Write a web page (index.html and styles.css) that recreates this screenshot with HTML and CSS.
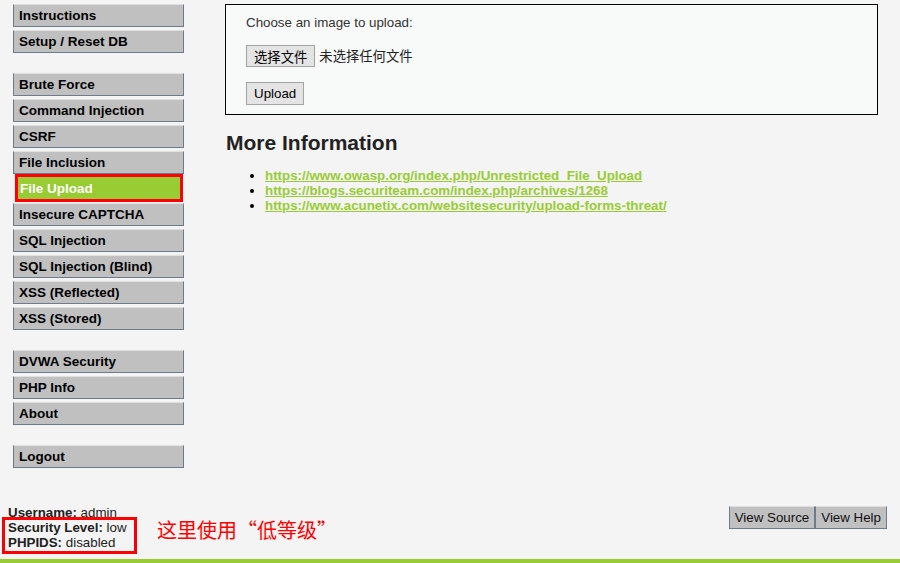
FILE: index.html
```html
<!DOCTYPE html>
<html lang="zh-CN">
<head>
  <meta charset="UTF-8">
  <title>Vulnerability: File Upload</title>
  <link rel="stylesheet" href="styles.css">
</head>
<body>
  <div class="page">
    <div class="columns">
      <!-- Side menu -->
      <div class="main-menu">
        <ul class="menu-block">
          <li><a href="#">Instructions</a></li>
          <li><a href="#">Setup / Reset DB</a></li>
        </ul>
        <ul class="menu-block">
          <li><a href="#">Brute Force</a></li>
          <li><a href="#">Command Injection</a></li>
          <li><a href="#">CSRF</a></li>
          <li><a href="#">File Inclusion</a></li>
          <li class="selected"><a href="#">File Upload</a></li>
          <li><a href="#">Insecure CAPTCHA</a></li>
          <li><a href="#">SQL Injection</a></li>
          <li><a href="#">SQL Injection (Blind)</a></li>
          <li><a href="#">XSS (Reflected)</a></li>
          <li><a href="#">XSS (Stored)</a></li>
        </ul>
        <ul class="menu-block">
          <li><a href="#">DVWA Security</a></li>
          <li><a href="#">PHP Info</a></li>
          <li><a href="#">About</a></li>
        </ul>
        <ul class="menu-block">
          <li><a href="#">Logout</a></li>
        </ul>
      </div>

      <!-- Main body -->
      <div class="main-body">
        <div class="code-area">
          <p>Choose an image to upload:</p>
          <div class="file-row">
            <button class="native-btn">选择文件</button>
            <span class="file-name">未选择任何文件</span>
          </div>
          <button class="native-btn upload-btn">Upload</button>
        </div>

        <h2>More Information</h2>
        <ul class="info-links">
          <li><a href="#">https://www.owasp.org/index.php/Unrestricted_File_Upload</a></li>
          <li><a href="#">https://blogs.securiteam.com/index.php/archives/1268</a></li>
          <li><a href="#">https://www.acunetix.com/websitesecurity/upload-forms-threat/</a></li>
        </ul>
      </div>
    </div>

    <!-- Status + view buttons -->
    <div class="bottom-row">
      <div class="status">
        <div><b>Username:</b> admin</div>
        <div class="marked">
          <div><b>Security Level:</b> low</div>
          <div><b>PHPIDS:</b> disabled</div>
        </div>
      </div>
      <div class="note">这里使用“低等级”</div>
      <div class="view-buttons">
        <button class="view-btn">View Source</button><button class="view-btn">View Help</button>
      </div>
    </div>

    <div class="footer-bar"></div>
  </div>
</body>
</html>
```

FILE: styles.css
```css
/* General */
* {
  box-sizing: border-box;
  margin: 0;
  padding: 0;
}

body {
  font-family: "Liberation Sans", Arial, "Noto Sans CJK SC", sans-serif;
  font-size: 13.33px;
  line-height: 15px;
  color: #000;
  background-color: #f4f4f4;
}

.page {
  height: 563px;
  display: flex;
  flex-direction: column;
}

.columns {
  display: flex;
  flex: 1;
  padding-top: 4px;
}

/* Side menu */
.main-menu {
  width: 171px;
  margin-left: 13px;
}

.menu-block {
  list-style: none;
  margin-bottom: 20px;
}

.menu-block li {
  margin-bottom: 3px;
}

.menu-block li a {
  display: block;
  height: 23px;
  padding: 3px 0 3px 5px;
  background-color: #c0c0c0;
  border: 1px solid #6d7b8d;
  border-top-color: #e0e0e0;
  color: #000;
  font-weight: bold;
  font-size: 13.5px;
  text-decoration: none;
}

.menu-block li.selected a {
  height: 28px;
  margin: -3px 1px -2px 2px;
  padding: 4px 0 3px 2px;
  background-color: #99cc33;
  border: 3px solid #ff0000;
  color: #fff;
}

/* Main body */
.main-body {
  width: 653px;
  margin-left: 41px;
}

.code-area {
  background-color: #f8f9f9;
  border: 1px solid #000;
  padding: 10px 20px 9px 20px;
  color: #333;
}

.code-area p {
  margin-bottom: 15px;
}

.file-row {
  display: flex;
  align-items: center;
  margin-bottom: 15px;
}

.native-btn {
  font-family: "Liberation Sans", Arial, "Noto Sans CJK SC", sans-serif;
  font-size: 13.33px;
  height: 22px;
  padding: 0 7px;
  background-color: #e4e4e4;
  border: 1px solid #a3a3a3;
  color: #000;
}

.file-name {
  margin-left: 4px;
  color: #222;
}

.upload-btn {
  height: 23px;
}

.main-body h2 {
  font-size: 21px;
  line-height: 24px;
  margin: 16px 0 13px 1px;
  color: #222;
}

.info-links {
  padding-left: 40px;
}

.info-links a {
  color: #99cc33;
  font-weight: bold;
}

/* Bottom row */
.bottom-row {
  display: flex;
  align-items: flex-end;
  padding-bottom: 5px;
}

.status {
  width: 150px;
  padding-left: 8px;
  color: #222;
}

.status .marked {
  width: 135px;
  margin: -3px 0 0 -6px;
  padding: 0 0 1px 3px;
  border: 3px solid #ff0000;
}

.note {
  margin: 0 0 10px 7px;
  font-family: "Noto Sans CJK SC", sans-serif;
  font-size: 20px;
  line-height: 28px;
  color: #ff0000;
}

.view-buttons {
  margin: 0 13px 25px auto;
  display: flex;
}

.view-btn {
  font-family: "Liberation Sans", Arial, sans-serif;
  font-size: 13.33px;
  height: 23px;
  padding: 0 5px;
  background-color: #c0c0c0;
  border: 1px solid #6d7b8d;
  border-top-color: #e0e0e0;
  color: #111;
}

.footer-bar {
  height: 4px;
  background-color: #99cc33;
}
```
